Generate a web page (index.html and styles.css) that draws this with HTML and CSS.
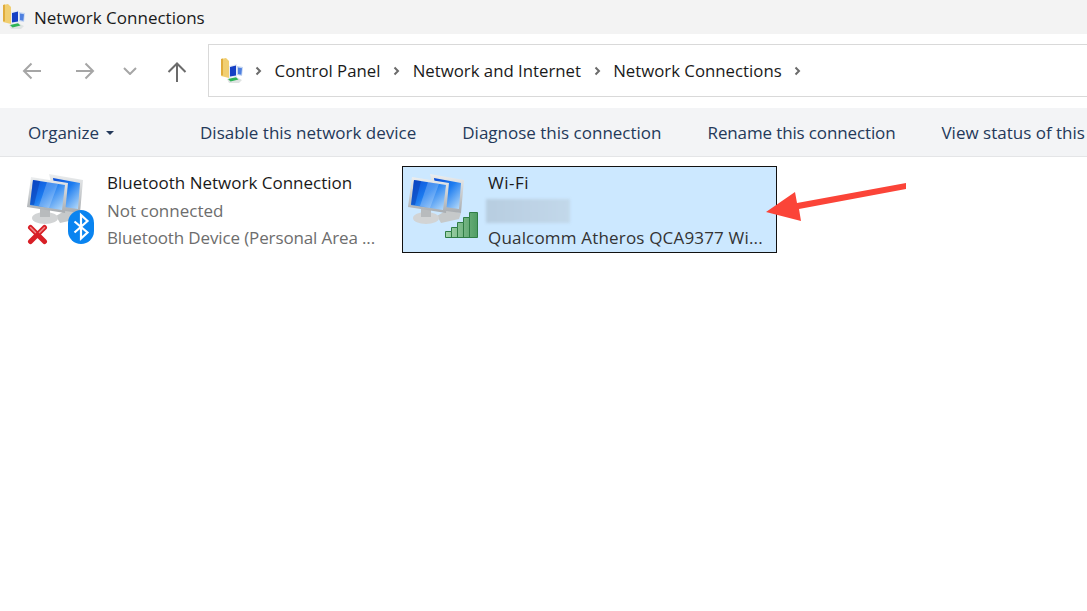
FILE: index.html
```html
<!DOCTYPE html>
<html lang="en">
<head>
<meta charset="utf-8">
<title>Network Connections</title>
<link rel="stylesheet" href="styles.css">
</head>
<body>
<svg class="defs" width="0" height="0" aria-hidden="true">
  <defs>
    <linearGradient id="scr" x1="0" y1="0" x2="1" y2="1">
      <stop offset="0" stop-color="#0a4bd6"/><stop offset=".45" stop-color="#1c7cf0"/><stop offset="1" stop-color="#bfe0fa"/>
    </linearGradient>
    <linearGradient id="bez" x1="0" y1="0" x2="0" y2="1">
      <stop offset="0" stop-color="#eceeef"/><stop offset="1" stop-color="#a8acb0"/>
    </linearGradient>
    <linearGradient id="bar" x1="0" y1="0" x2="1" y2="0">
      <stop offset="0" stop-color="#a6d6ae"/><stop offset="1" stop-color="#4f9c63"/>
    </linearGradient>
    <symbol id="pcs" viewBox="0 0 64 56">
      <path d="M42 40l14 3-2 6-18 4-4-7z" fill="#c6c9ca"/>
      <path d="M25 4l34 6-3 33-22-3z" fill="url(#bez)"/>
      <path d="M29 8l27 5-2 26-21-3z" fill="url(#scr)"/>
      <ellipse cx="21" cy="48" rx="13" ry="6" fill="#d2d4d5"/>
      <path d="M16 38h10v9H16z" fill="#b8bbbd"/>
      <path d="M7 7l37 6-3 30-38-6z" fill="url(#bez)"/>
      <path d="M9 10l32 5-3 25-32-5z" fill="url(#scr)"/>
      <path d="M23 12l11 2-9 24-10-2z" fill="#fff" opacity=".22"/>
      <path d="M9 10l7 1-6 24-4-.600z" fill="#0735a8" opacity=".45"/>
    </symbol>
    <symbol id="folder" viewBox="0 0 24 26">
      <path d="M1 1l5-1 3 3v17l-8-2z" fill="#f1cf72"/>
      <path d="M1 1l2-.500v17l-2-.500z" fill="#e0ac3c"/>
      <path d="M9 8l8-2v13l-8 1z" fill="#e6ecf5"/>
      <path d="M10 9l6-1.500v10l-6 1z" fill="#1540c4"/>
      <path d="M17 8l6 1-1 9-5-1z" fill="#c3d5f2"/>
      <path d="M18 9.500l4 .800-.700 6.500-3.300-.800z" fill="#4f80e0"/>
      <path d="M7 21l9-2 6 3-3 3H9z" fill="#dfe3e2"/>
      <path d="M8 21l8-1.800 2.500 2.300-8 2z" fill="#2fb457"/>
    </symbol>
  </defs>
</svg>
<header class="titlebar">
  <svg class="folder" width="24" height="26"><use href="#folder"/></svg>
  <span>Network Connections</span>
</header>
<nav class="navbar">
  <svg class="nav-back" width="20" height="18" viewBox="0 0 20 18"><path d="M19 9H2M9.500 1.500L2 9l7.500 7.500" class="st light"/></svg>
  <svg class="nav-fwd" width="20" height="18" viewBox="0 0 20 18"><path d="M1 9h17M10.500 1.500L18 9l-7.500 7.500" class="st light"/></svg>
  <svg class="nav-down" width="14" height="8" viewBox="0 0 14 8"><path d="M1 1l6 6 6-6" class="st light"/></svg>
  <svg class="nav-up" width="20" height="20" viewBox="0 0 20 20"><path d="M10 20V1.500M1.500 10L10 1.500l8.500 8.500" class="st dark"/></svg>
  <div class="address">
    <svg class="folder" width="24" height="26"><use href="#folder"/></svg>
    <svg class="chev" width="7" height="10" viewBox="0 0 7 10"><path d="M1.500 1.500L5 5 1.500 8.500" class="st mid"/></svg>
    <span>Control Panel</span>
    <svg class="chev" width="7" height="10" viewBox="0 0 7 10"><path d="M1.500 1.500L5 5 1.500 8.500" class="st mid"/></svg>
    <span>Network and Internet</span>
    <svg class="chev" width="7" height="10" viewBox="0 0 7 10"><path d="M1.500 1.500L5 5 1.500 8.500" class="st mid"/></svg>
    <span>Network Connections</span>
    <svg class="chev" width="7" height="10" viewBox="0 0 7 10"><path d="M1.500 1.500L5 5 1.500 8.500" class="st mid"/></svg>
  </div>
</nav>
<div class="toolbar">
  <span class="organize">Organize<i class="caret"></i></span>
  <span>Disable this network device</span>
  <span>Diagnose this connection</span>
  <span class="tight">Rename this connection</span>
  <span>View status of this</span>
</div>
<main class="items">
  <section class="item">
    <div class="icon">
      <svg class="pc" width="64" height="56"><use href="#pcs"/></svg>
      <svg class="x" width="21" height="21" viewBox="0 0 21 21"><path d="M3.500 3.500l14 14M17.500 3.500l-14 14" stroke="#d81f26" stroke-width="5" stroke-linecap="round"/><path d="M3.500 3.500l5 5M17.500 3.500l-5 5" stroke="#f08a8a" stroke-width="1.500" stroke-linecap="round"/></svg>
      <svg class="bt" width="26" height="34" viewBox="0 0 26 34"><rect width="26" height="34" rx="13" fill="#0a84f0"/><path d="M6.500 11.500l13 11-6.500 6V5l6.500 6-13 11.500" fill="none" stroke="#fff" stroke-width="2.200"/></svg>
    </div>
    <div class="text plain">
      <div class="name">Bluetooth Network Connection</div>
      <div class="sub">Not connected</div>
      <div class="sub narrow">Bluetooth Device (Personal Area ...</div>
    </div>
  </section>
  <section class="item selected">
    <div class="icon">
      <svg class="pc" width="64" height="56"><use href="#pcs"/></svg>
      <svg class="bars" width="33" height="26" viewBox="0 0 33 26">
        <path d="M.500 25.500v-6h6v-4h6v-5h6v-5h6v-5h8v25z" fill="url(#bar)" stroke="#2f7d45"/>
        <path d="M6.500 19.500v6M12.500 15.500v10M18.500 10.500v15M24.500 5.500v20" stroke="#2f7d45"/>
      </svg>
    </div>
    <div class="text">
      <div class="name wide">Wi-Fi</div>
      <div class="blur"></div>
      <div class="sub widen">Qualcomm Atheros QCA9377 Wi...</div>
    </div>
  </section>
</main>
<svg class="arrow" width="150" height="60" viewBox="0 0 150 60"><path d="M4 34L33 14l2 11L144 5v6L37 31l2 12z" fill="#fb4438"/></svg>
</body>
</html>
```
FILE: styles.css
```css
* { box-sizing: border-box; }
html, body { margin: 0; height: 100%; overflow: hidden; }
body { background: #fff; font-family: "Open Sans", "Noto Sans", sans-serif; font-size: 17px; color: #1a1a1a; position: relative; }
.defs { position: absolute; }
.st { fill: none; stroke-width: 2; }
.st.light { stroke: #a6a6a6; }
.st.dark { stroke: #6b6b6b; }
.st.mid { stroke: #6b6b6b; }

.titlebar { height: 34px; background: #f3f3f3; display: flex; align-items: center; padding-left: 2px; gap: 8px; }
.navbar { height: 74px; display: flex; align-items: center; padding: 0 0 0 22px; }
.nav-fwd { margin-left: 33px; }
.nav-down { margin-left: 28px; }
.nav-up { margin-left: 30px; margin-top: 1px; }
.address { margin-left: 21px; margin-bottom: 1px; flex: 1; height: 53px; border: 1px solid #d9d9d9; border-right: 0; display: flex; align-items: center; padding-left: 11px; gap: 12.600px; font-size: 16.800px; }
.address .folder { margin-right: -1.600px; }
.toolbar { height: 49px; background: #f3f4f6; border-bottom: 1px solid #e4e5e7; display: flex; align-items: center; padding-left: 28px; white-space: nowrap; color: #24395a; gap: 46px; }
.organize { flex: none; width: 126px; }
.tight { letter-spacing: -0.130px; }
.caret { display: inline-block; margin-left: 7px; vertical-align: 4px; border: 4px solid transparent; border-top-color: #24395a; border-bottom: 0; }
.items { display: flex; padding: 9px 0 0 22px; gap: 5px; }
.item { width: 375px; height: 87px; display: flex; padding: 7px 0 0 3px; border: 1px solid transparent; }
.item.selected { background: #cce8ff; border-color: #111; }
.icon { position: relative; width: 82px; flex: none; }
.pc { position: absolute; left: -2px; top: -4px; }
.selected .pc { left: -1px; }
.x { position: absolute; left: 1px; top: 50px; }
.bt { position: absolute; left: 42px; top: 36px; }
.bars { position: absolute; left: 39px; top: 38px; }
.text { line-height: 27.500px; margin-top: -5px; white-space: nowrap; }
.plain { margin-left: -1px; }
.name { color: #1a1a1a; }
.sub { color: #6d6d6d; }
.narrow { letter-spacing: -0.130px; }
.wide { letter-spacing: 0.500px; }
.widen { letter-spacing: 0.180px; }
.selected .sub { color: #333; }
.blur { height: 24px; width: 84px; margin: 2px 0 1px -2px; background: linear-gradient(90deg, #b7cde0, #bdd2e5 50%, #c2d8ea); filter: blur(1.500px); }
.arrow { position: absolute; left: 762px; top: 178px; }
```
